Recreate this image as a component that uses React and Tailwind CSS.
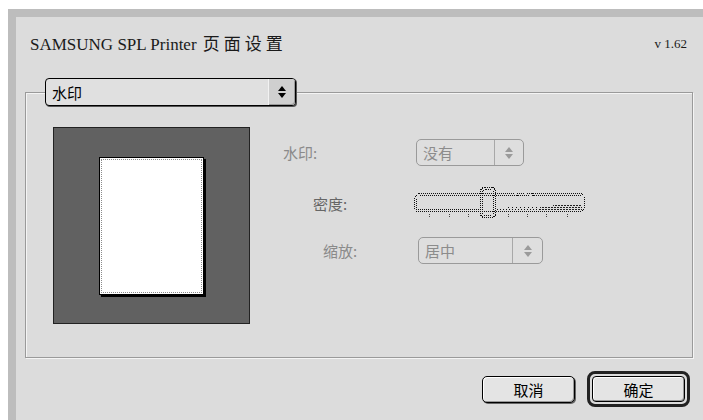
import React from "react";

const cjk = { fontFamily: '"Noto Sans CJK SC", "Noto Sans", sans-serif' };
const serif = { fontFamily: '"Liberation Serif", "Noto Sans CJK SC", serif' };

function Arrows({ color = "#000" }) {
  return (
    <svg width="10" height="14" viewBox="0 0 10 14">
      <path d="M5 1 L9 6 L1 6 Z" fill={color} />
      <path d="M5 13 L9 8 L1 8 Z" fill={color} />
    </svg>
  );
}

function DisabledPopup({ label, w, arrowW }) {
  return (
    <div
      className="flex h-[27px] rounded-[5px] border border-[#9a9a9a] bg-[#dedede] text-[15px] text-[#8c8c8c]"
      style={{ width: w, ...cjk }}
    >
      <div className="flex flex-1 items-center pl-[6px] leading-none">{label}</div>
      <div
        className="flex items-center justify-center border-l border-[#a8a8a8]"
        style={{ width: arrowW }}
      >
        <Arrows color="#9a9a9a" />
      </div>
    </div>
  );
}

function Slider() {
  const ticks = [16, 36, 55, 95, 114, 133, 154];
  return (
    <svg width="174" height="36" viewBox="0 0 174 36" shapeRendering="crispEdges">
      <g fill="none" stroke="#111" strokeWidth="1" strokeDasharray="1 1">
        <path d="M5.5 8.5 H168.5 L171.5 11.5 V23.5 L168.5 26.5 H3.5 L1.5 24.5 V12.5 L5.5 8.5" />
        <path d="M6.5 10.5 H167.5 M3.5 13.5 V24.5 H66.5" />
        <path d="M84 24.5 H127" strokeDasharray="1 2" />
        <path d="M95 22.5 H127" strokeDasharray="1 3" />
        <rect x="67.5" y="2.5" width="15" height="30" rx="4" />
        <rect x="69.5" y="4.5" width="11" height="26" rx="3" />
      </g>
      <g fill="none" stroke="#222" strokeWidth="1" strokeDasharray="1 0.5">
        <path d="M127 22.5 H169" />
        <path d="M127 24.5 H169" />
        <path d="M140 20.5 H169" />
      </g>
      <g stroke="#444" strokeWidth="1">
        {ticks.map((x) => (
          <path key={x} d={`M${x + 0.5} 29 V33`} strokeDasharray="1 1" />
        ))}
      </g>
    </svg>
  );
}

export default function App() {
  return (
    <div className="h-[420px] w-[703px] overflow-hidden bg-white pl-[8px] pt-[9px]">
      <div className="flex h-[411px] flex-col border-l-[8px] border-t-[8px] border-[#bdbdbd] bg-[#dcdcdc]">
        {/* title */}
        <div className="mt-[17px] flex h-[20px] items-center justify-between pl-[14px] pr-[16px]">
          <div className="text-[17px] leading-[20px] text-[#1a1a1a]" style={serif}>
            SAMSUNG SPL Printer{" "}
            <span style={cjk} className="ml-[2px] text-[17px] tracking-[4px]">
              页面设置
            </span>
          </div>
          <div className="text-[13px] text-[#1a1a1a]" style={serif}>
            v 1.62
          </div>
        </div>

        {/* group box */}
        <div className="ml-[9px] mr-[10px] mt-[38px] h-[266px] border border-[#9a9a9a] shadow-[inset_1px_1px_0_#f4f4f4,1px_1px_0_#f4f4f4]">
          <div className="-mt-[15px] ml-[19px] flex h-[28px] w-[251px] rounded-[4px] border border-black bg-[#e0e0e0] shadow-[1px_1px_0_#555]">
            <div
              className="flex flex-1 items-center pl-[6px] text-[15px] leading-none text-black"
              style={cjk}
            >
              水印
            </div>
            <div className="flex w-[27px] items-center justify-center rounded-r-[3px] border-l border-[#f2f2f2] bg-[#cfcfcf] shadow-[inset_-1px_-1px_0_#9a9a9a]">
              <Arrows />
            </div>
          </div>

          <div className="flex">
            {/* preview */}
            <div className="ml-[27px] mt-[21px] flex h-[197px] w-[197px] items-center justify-center border border-[#222] bg-[#616161]">
              <div className="h-[138px] w-[105px] border border-black bg-white p-[1px] shadow-[2px_2px_0_#000]">
                <div className="h-full w-full border border-dotted border-[#8a8a8a]" />
              </div>
            </div>

            {/* controls */}
            <div className="ml-[33px] mt-[33px] flex flex-col text-[15px] text-[#8a8a8a]" style={cjk}>
              <div className="flex h-[27px] items-center">
                <div className="w-[133px] leading-none">水印:</div>
                <DisabledPopup label="没有" w={108} arrowW={29} />
              </div>
              <div className="mt-[19px] flex h-[36px] items-center">
                <div className="ml-[30px] w-[100px] leading-none text-[#666]">密度:</div>
                <Slider />
              </div>
              <div className="mt-[16px] flex h-[27px] items-center">
                <div className="ml-[40px] w-[95px] leading-none">缩放:</div>
                <DisabledPopup label="居中" w={125} arrowW={30} />
              </div>
            </div>
          </div>
        </div>

        {/* buttons */}
        <div className="mr-[13px] mt-[13px] flex items-center justify-end gap-[12px]" style={cjk}>
          <div className="flex h-[27px] w-[93px] items-center justify-center rounded-[5px] border border-black bg-[#e4e4e4] text-[15px] leading-none text-black shadow-[inset_1px_1px_0_#fff,inset_-1px_-1px_0_#999,1px_1px_0_#666]">
            取消
          </div>
          <div className="flex h-[36px] w-[103px] items-center justify-center rounded-[8px] border-[3px] border-[#222] bg-[#dcdcdc] p-[2px]">
            <div className="flex h-full w-full items-center justify-center rounded-[4px] border border-black bg-[#e4e4e4] text-[15px] leading-none text-black shadow-[inset_1px_1px_0_#fff,inset_-1px_-1px_0_#999]">
              确定
            </div>
          </div>
        </div>
      </div>
    </div>
  );
}
